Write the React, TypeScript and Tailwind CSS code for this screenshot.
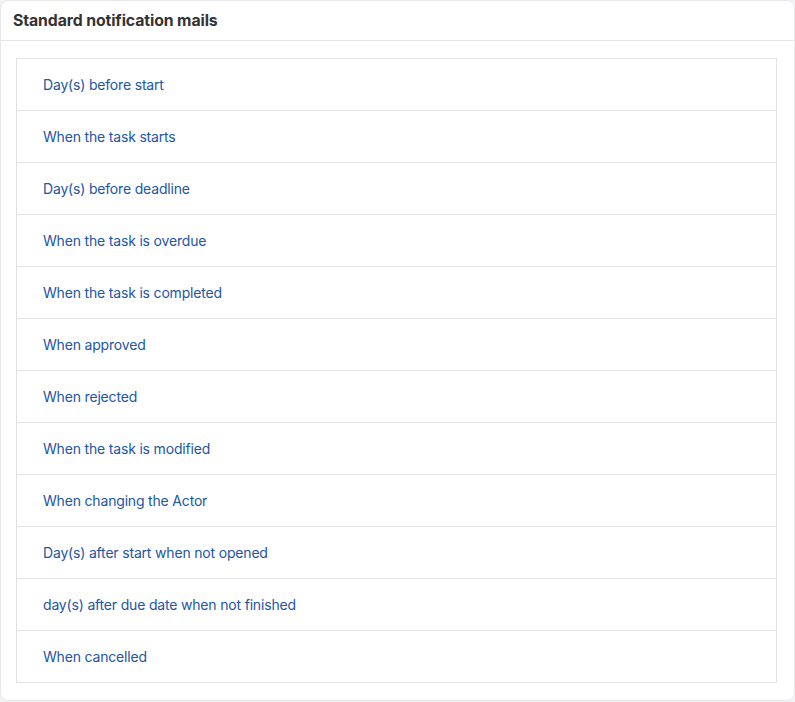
const items = [
  "Day(s) before start",
  "When the task starts",
  "Day(s) before deadline",
  "When the task is overdue",
  "When the task is completed",
  "When approved",
  "When rejected",
  "When the task is modified",
  "When changing the Actor",
  "Day(s) after start when not opened",
  "day(s) after due date when not finished",
  "When cancelled",
];

const App = () => {
  return (
    <div className="w-[795px] h-[702px] bg-[#f3f3f5] font-['Inter',sans-serif]">
      <div className="h-[701px] bg-white rounded-[8px] border border-[#e8e8ea]">
        <div className="h-[40px] border-b border-[#e4e4e4] flex items-center px-[12px] pt-px">
          <h2 className="text-[15.8px] font-bold text-[#333333] tracking-[-0.1px]">Standard notification mails</h2>
        </div>
        <ul className="ml-[15px] mr-[17px] mt-[17px] border border-[#e2e2e2]">
          {items.map((item, i) => (
            <li
              key={i}
              className={`flex items-center pl-[26px] text-[14px] tracking-[-0.18px] text-[#2255a4] ${
                i < items.length - 1 ? "h-[52px] border-b border-[#e2e2e2]" : "h-[51px]"
              }`}
            >
              {item}
            </li>
          ))}
        </ul>
      </div>
    </div>
  );
};

export default App;
